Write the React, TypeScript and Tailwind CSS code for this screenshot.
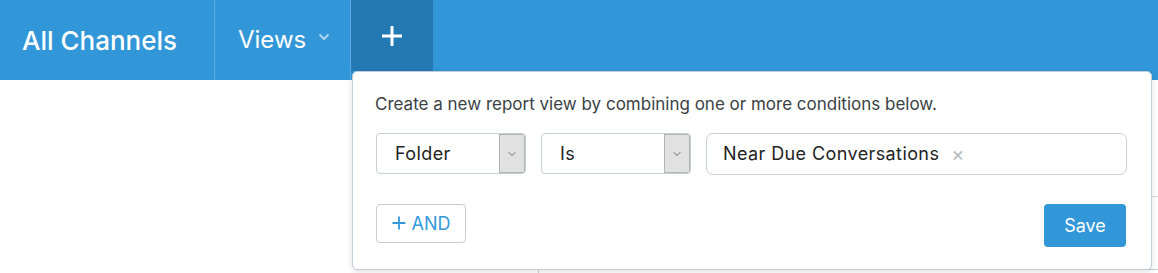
import { ChevronDown } from 'lucide-react';

const font = { fontFamily: 'Inter, "Noto Sans", sans-serif' };

function SelectBox({ label }: { label: string }) {
  return (
    <div className="flex h-[41px] w-[150px] items-stretch overflow-hidden rounded-[4px] border border-[#c9ced3] bg-white">
      <div className="flex flex-1 items-center pl-[18px] text-[18px] tracking-[0.4px] text-[#222]">{label}</div>
      <div className="flex w-[26px] items-center justify-center border border-[#b4b4b4] bg-[#e1e1e1]">
        <ChevronDown className="h-3 w-3 text-[#444]" strokeWidth={1.5} />
      </div>
    </div>
  );
}

export default function App() {
  return (
    <div className="relative h-[273px] w-[1158px] overflow-hidden bg-white" style={font}>
      <header className="flex h-20 items-stretch bg-[#3297d8] text-white">
        <div className="flex w-[215px] items-center border-r border-[#5cabe2] pl-[22px] text-[26px] font-medium">
          All Channels
        </div>
        <div className="flex w-[136px] items-center gap-[12px] border-r border-[#5cabe2] pl-[23px] text-[24px]">
          Views
          <svg width="12" height="8" viewBox="0 0 12 8" className="mt-[-6px]">
            <path d="M1.5 1.5 L6 6 L10.5 1.5" fill="none" stroke="#a8d2f0" strokeWidth="2.2" />
          </svg>
        </div>
        <div className="flex h-[71px] w-[82px] items-center justify-center bg-[#2479b5]">
          <svg width="22" height="22" viewBox="0 0 22 22">
            <path d="M11 1 V21 M1 11 H21" stroke="white" strokeWidth="3" />
          </svg>
        </div>
      </header>

      <div className="ml-[538px] mt-[189px] h-4 border-l border-t border-[#c8ced4]" />
      <div className="absolute left-[1152px] top-[196px] h-px w-2 bg-[#d5d9dd]" />

      <div className="absolute left-[352px] top-[71px] h-[199px] w-[800px] rounded-[5px] border border-[#c3cdd6] bg-white shadow-[0_2px_6px_rgba(0,0,0,0.12)]">
        <p className="pl-[22px] pt-[20px] text-[17px] text-[#3a3f44]">
          Create a new report view by combining one or more conditions below.
        </p>
        <div className="mt-[15px] flex items-center gap-[15px] pl-[23px]">
          <SelectBox label="Folder" />
          <SelectBox label="Is" />
          <div className="flex h-[42px] w-[421px] items-center rounded-[7px] border border-[#c5ced7] pl-[16px] text-[18px] tracking-[0.4px] text-[#222]">
            Near Due Conversations
            <span className="ml-[12px] text-[20px] text-[#b8bcc0]">×</span>
          </div>
        </div>
        <div className="mt-[25px] flex items-center justify-between pl-[23px] pr-[25px]">
          <button className="flex h-[39px] w-[90px] items-center justify-center gap-[6px] rounded-[4px] border border-[#c5ccd3] text-[18px] text-[#3499dc]">
            <svg width="14" height="14" viewBox="0 0 14 14">
              <path d="M7 0.5 V13.5 M0.5 7 H13.5" stroke="#3499dc" strokeWidth="1.8" />
            </svg>
            AND
          </button>
          <button className="mt-[4px] h-[43px] w-[82px] rounded-[4px] bg-[#3297d8] text-[18px] text-white">Save</button>
        </div>
      </div>
    </div>
  );
}
